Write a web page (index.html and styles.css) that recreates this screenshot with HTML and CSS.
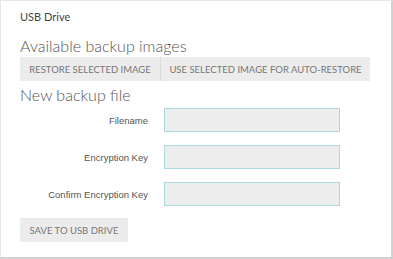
FILE: index.html
```html
<!DOCTYPE html>
<html>
<head>
<meta charset="utf-8">
<link rel="stylesheet" href="styles.css">
</head>
<body>
<div class="panel">
  <div class="title">USB Drive</div>
  <h2 class="heading">Available backup images</h2>
  <div class="btn-group">
    <button class="btn btn-first">RESTORE SELECTED IMAGE</button>
    <button class="btn btn-second">USE SELECTED IMAGE FOR AUTO-RESTORE</button>
  </div>
  <h2 class="heading heading-second">New backup file</h2>
  <div class="form">
    <div class="row">
      <label class="label">Filename</label>
      <div class="input"></div>
    </div>
    <div class="row">
      <label class="label">Encryption Key</label>
      <div class="input"></div>
    </div>
    <div class="row">
      <label class="label">Confirm Encryption Key</label>
      <div class="input"></div>
    </div>
  </div>
  <button class="btn btn-save">SAVE TO USB DRIVE</button>
</div>
</body>
</html>
```
FILE: styles.css
```css
html, body {
  margin: 0;
  padding: 0;
  background: #ffffff;
}
.panel {
  box-sizing: border-box;
  width: 393px;
  height: 259px;
  border-top: 1px solid #e6e6e6;
  border-left: 1px solid #e6e6e6;
  border-right: 2px solid #d2d2d2;
  border-bottom: 2px solid #d2d2d2;
  padding: 9px 20px 0 19px;
  font-family: "Lato", sans-serif;
  color: #555;
}
.title {
  font-family: "Lato", sans-serif;
  font-size: 11px;
  line-height: 14px;
  color: #444;
}
.heading {
  margin: 12px 0 0;
  font-family: "Lato", sans-serif;
  font-weight: 300;
  font-size: 16px;
  line-height: 19px;
  color: #555;
}
.heading-second {
  margin-top: 4px;
}
.btn-group {
  display: flex;
  margin-top: 2px;
}
.btn {
  height: 24px;
  padding: 0;
  border: none;
  background: #ececec;
  font-family: "Lato", sans-serif;
  font-size: 9.5px;
  white-space: nowrap;
  text-align: center;
  color: #777;
  cursor: default;
}
.btn-first {
  width: 141px;
  border-right: 1px solid #dadada;
}
.btn-second {
  width: 209px;
}
.form {
  display: flex;
  flex-direction: column;
  gap: 13px;
  margin-top: 4px;
}
.row {
  display: flex;
  align-items: center;
}
.label {
  width: 128px;
  text-align: right;
  font-family: "Liberation Sans", Arial, sans-serif;
  font-size: 9.5px;
  font-weight: normal;
  color: #555;
}
.input {
  box-sizing: border-box;
  width: 176px;
  height: 24px;
  margin-left: 16px;
  border: 1px solid #aedbe3;
  background: #ededed;
}
.btn-save {
  display: block;
  width: 108px;
  margin-top: 12px;
}
```
